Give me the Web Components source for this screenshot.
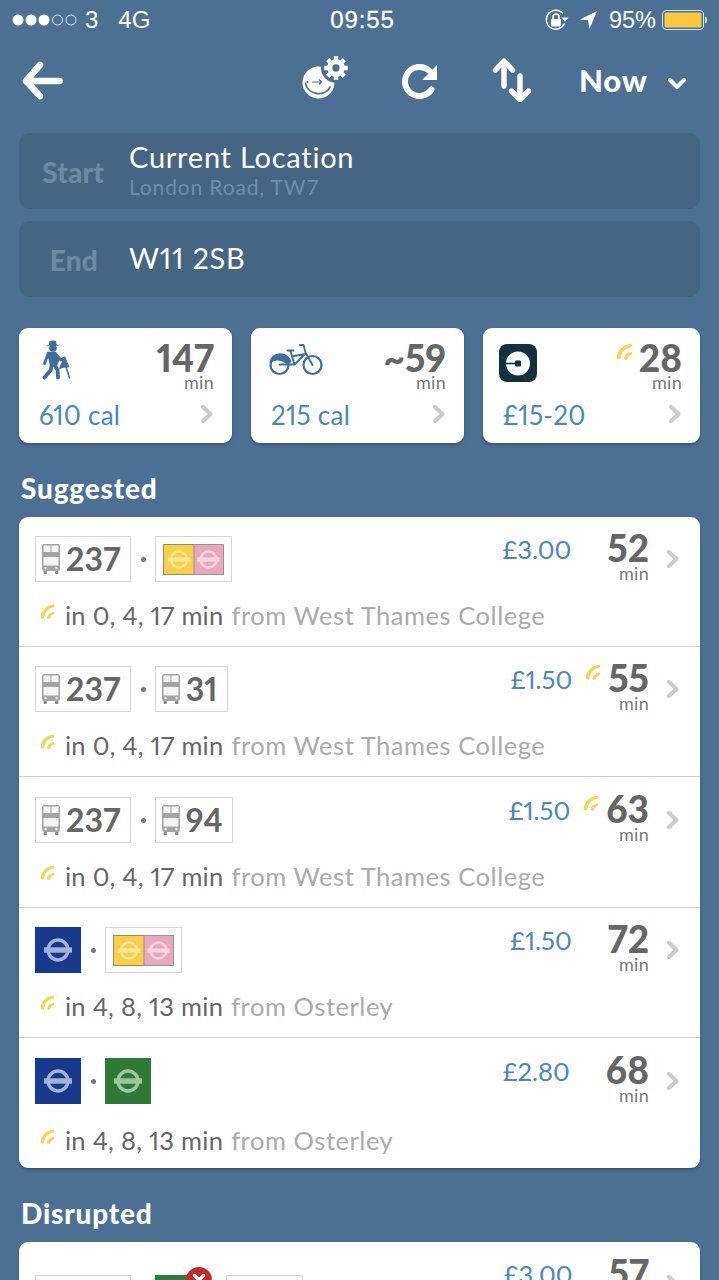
<!DOCTYPE html>
<html lang="en"><head><meta charset="utf-8"><title>Routes</title>
<style>
html,body{margin:0;padding:0;background:#4c7094;}
body{width:719px;height:1280px;overflow:hidden;font-family:Lato,"Open Sans",sans-serif;}
.cards{display:grid;grid-template-columns:213px 213px 217px;gap:19px;padding:31px 19px 0 19px;}
.fields{display:flex;flex-direction:column;gap:12px;padding:0 19px;}
</style></head><body>
<status-bar></status-bar>
<nav-bar></nav-bar>
<div class="fields">
<place-field label="Start" title-text="Current Location" sub="London Road, TW7"></place-field>
<place-field label="End" title-text="W11 2SB"></place-field>
</div>
<div class="cards">
<mode-card time="147" sub="610 cal" icon="walk"></mode-card>
<mode-card time="~59" sub="215 cal" icon="bike"></mode-card>
<mode-card time="28" sub="£15-20" icon="uber" live></mode-card>
</div>
<section-title style="--top:30px">Suggested</section-title>
<route-list style="margin-top:14px">
<route-row price="£3.00" time="52"><bus-badge slot="badges" num="237"></bus-badge><sep-dot slot="badges"></sep-dot><rail-badge slot="badges" pair></rail-badge>in 0, 4, 17 min<span slot="from">from West Thames College</span></route-row>
<route-row price="£1.50" time="55" live><bus-badge slot="badges" num="237"></bus-badge><sep-dot slot="badges"></sep-dot><bus-badge slot="badges" num="31"></bus-badge>in 0, 4, 17 min<span slot="from">from West Thames College</span></route-row>
<route-row price="£1.50" time="63" live tall><bus-badge slot="badges" num="237"></bus-badge><sep-dot slot="badges"></sep-dot><bus-badge slot="badges" num="94"></bus-badge>in 0, 4, 17 min<span slot="from">from West Thames College</span></route-row>
<route-row price="£1.50" time="72"><rail-badge slot="badges" color="#173a8e" ring="#a3b3d6"></rail-badge><sep-dot slot="badges"></sep-dot><rail-badge slot="badges" pair></rail-badge>in 4, 8, 13 min<span slot="from">from Osterley</span></route-row>
<route-row price="£2.80" time="68" last><rail-badge slot="badges" color="#173a8e" ring="#a3b3d6"></rail-badge><sep-dot slot="badges"></sep-dot><rail-badge slot="badges" color="#2f7a37" ring="#9ac8a0"></rail-badge>in 4, 8, 13 min<span slot="from">from Osterley</span></route-row>
</route-list>
<section-title style="--top:30px">Disrupted</section-title>
<route-list style="margin-top:14px">
<route-row price="£3.00" time="57" disrupted><bus-badge slot="badges" num="237"></bus-badge><sep-dot slot="badges"></sep-dot><rail-badge slot="badges" color="#2f7a37" ring="#9ac8a0" blocked></rail-badge><sep-dot slot="badges" style="--l:11px"></sep-dot><rail-badge slot="badges" pair></rail-badge></route-row>
</route-list>
<script>
const wifi=(w)=>`<svg width="${w}" height="${w}" viewBox="0 0 16 16" style="display:block"><path d="M.6 13.500C1 6.500 6.500 1 13.500.6c.7 0 1.200.7.9 1.400l-.6 1.500C8.500 4 4.800 8 4 13.800c-.2 1-3.400 1-3.400-.3z" fill="#efd654"/><path d="M7 14.300C7.200 11 9.800 8.300 13.500 8c.8 0 1 .6.7 1.300l-.5 1.300c-1.900.3-3 1.500-3.500 3.700-.2.800-2.800.9-2.700 0z" fill="#efd654"/></svg>`;
const chev=`<svg width="14" height="20" viewBox="0 0 14 20" style="display:block"><path d="M3 3l7.500 7L3 17" fill="none" stroke="#cbcbcb" stroke-width="4.200" stroke-linecap="round" stroke-linejoin="round"/></svg>`;
const ICONS={
walk:`<svg width="32" height="40" viewBox="0 0 32 40" style="display:block;margin:12px 0 0 21px"><g fill="#3f6e9b" stroke="#3f6e9b" stroke-linecap="round" stroke-linejoin="round"><path d="M9.500 1c2.500-.8 5-.6 6.500 0l.5 3.500 2.500 1.200-13 0L9 4.500z" stroke="none"/><circle cx="13" cy="8" r="3.800" stroke="none"/><path d="M7.500 12.500h8l3 8-2 5H10.500l-1-5z" stroke-width="1.400"/><path d="M15 13.500l6 6.500 2.500-1.500" fill="none" stroke-width="3"/><path d="M8 14L4.500 23.500" fill="none" stroke-width="3"/><path d="M12 24l-1.500 6.500L4.500 37.500" fill="none" stroke-width="3.800"/><path d="M14 24l3.500 6 .5 7.500" fill="none" stroke-width="3.800"/><path d="M24.500 17L19.500 28.500c2.500-1 5-1.700 9-1.500z" stroke-width="1"/><path d="M25.500 25l4 13" fill="none" stroke-width="1.500"/></g></svg>`,
bike:`<svg width="54" height="32" viewBox="0 0 54 32" style="display:block;margin:16px 0 0 18px"><g fill="none" stroke="#3f6e9b" stroke-linecap="round" stroke-linejoin="round"><circle cx="10.500" cy="21" r="9" stroke-width="2.200"/><circle cx="43.500" cy="21" r="9" stroke-width="2.200"/><path d="M.5 19C1 13 6.500 8.500 13 9.500c4.500.6 8 3.500 9.500 8-1.500 2.500-4 3-6 2C12 15.500 6 15.500.5 19z" fill="#3f6e9b" stroke="none"/><path d="M18.500 6.500h6M21.500 7l4 13.500h-15M31 1h3.500l2 7.500 7 12.500M36.500 9.500L25.500 20.500M23 12.500l13 -2.500" stroke-width="1.900"/></g></svg>`,
uber:`<svg width="38" height="38" viewBox="0 0 38 38" style="display:block;margin:16px 0 0 16px"><rect width="38" height="38" rx="8" fill="#12303f"/><path d="M0 12l19 8 19-10M8 0l11 20 9 18M0 28l19-8" stroke="#1d4050" stroke-width="1" fill="none"/><circle cx="19" cy="19.500" r="12" fill="#fff"/><path d="M7 19.500h12" stroke="#12303f" stroke-width="1.600"/><rect x="16" y="16.500" width="6" height="6" rx="1" fill="#12303f"/></svg>`};
function def(name,html){customElements.define(name,class extends HTMLElement{connectedCallback(){if(this.shadowRoot)return;const r=this.attachShadow({mode:'open'});r.innerHTML=typeof html==='function'?html(this):html;}});}

def('status-bar',`<style>:host{display:flex;align-items:center;height:40px;position:relative;color:#fff;font:400 24px "Liberation Sans",Arial,sans-serif;}
.sig{margin-left:12px;display:block}.l{margin-left:6px}.g{margin-left:20px}.c{text-align:center;padding-left:6px;letter-spacing:.9px;-webkit-text-stroke:.3px #fff}.r{display:flex;align-items:center;margin-right:12px}
.p{margin:0 6px 0 12px;font-size:23.500px}</style>
<svg class="sig" width="67" height="14" viewBox="0 0 67 14"><g fill="#fff"><circle cx="6" cy="7" r="5.500"/><circle cx="19" cy="7" r="5.500"/><circle cx="32" cy="7" r="5.500"/></g><g fill="none" stroke="#dfe6ee" stroke-width="1"><circle cx="45.500" cy="7" r="5"/><circle cx="59" cy="7" r="5"/></g></svg>
<span class="l">3</span><span class="g">4G</span><span class="c" style="position:absolute;left:0;right:0">09:55</span><span style="flex:1"></span>
<span class="r"><svg width="24" height="22" viewBox="0 0 24 22" style="margin-right:11px"><path d="M19.500 14.500A9.500 9.500 0 1 1 18 4.500" fill="none" stroke="#fff" stroke-width="1.400"/><path d="M16.500 7.500h7l-3.500 4z" fill="#fff" transform="translate(0 1)"/><rect x="6" y="10" width="10" height="7.500" rx="1" fill="#fff"/><path d="M8 10V8a3 3 0 0 1 6 0v2" fill="none" stroke="#fff" stroke-width="1.500"/></svg>
<svg width="17" height="18" viewBox="0 0 17 18"><path d="M17 0L0 8.500l8 .8L9.500 18z" fill="#fff"/></svg>
<span class="p">95%</span>
<svg width="45" height="20" viewBox="0 0 45 20"><rect x=".5" y=".5" width="41" height="19" rx="3.500" fill="none" stroke="#d7dfe7"/><rect x="2.500" y="2.500" width="37" height="15" rx="1.500" fill="#f9c83c"/><path d="M43 6.500c1.500.3 2 1.500 2 3.500s-.5 3.200-2 3.500z" fill="#d7dfe7"/></svg></span>`);

def('nav-bar',`<style>:host{display:flex;align-items:flex-start;height:93px;position:relative;color:#fff}
svg{display:block}.now{font:900 31px Lato,sans-serif;letter-spacing:.8px;line-height:36px;margin:22px 0 0 46px}</style>
<svg style="margin:21px 0 0 21px" width="42" height="40" viewBox="0 0 42 40"><path d="M38.500 20H6M19 4L5 20l14 15" fill="none" stroke="#fff" stroke-width="6.500" stroke-linecap="round" stroke-linejoin="round"/></svg>
<svg style="margin:16px 0 0 238px" width="48" height="44" viewBox="0 0 48 44"><circle cx="17.500" cy="26.500" r="16" fill="#fff"/><circle cx="35" cy="12" r="15" fill="#4c7094"/><path d="M4.500 27.500C7 39 24 41.500 29 31" fill="none" stroke="#4c7094" stroke-width="1.800" stroke-linecap="round"/><circle cx="6.500" cy="26" r="1.100" fill="#4c7094"/><path d="M11 26h9.500M18 23.500l2.500 2.500-2.500 2.500" fill="none" stroke="#4c7094" stroke-width="1.200"/><g transform="translate(35 12) scale(1.12)"><circle r="5.500" fill="none" stroke="#fff" stroke-width="4.500"/><g fill="#fff"><rect x="-2" y="-10.500" width="4" height="4"/><rect x="-2" y="-10.500" width="4" height="4" transform="rotate(45)"/><rect x="-2" y="-10.500" width="4" height="4" transform="rotate(90)"/><rect x="-2" y="-10.500" width="4" height="4" transform="rotate(135)"/><rect x="-2" y="-10.500" width="4" height="4" transform="rotate(180)"/><rect x="-2" y="-10.500" width="4" height="4" transform="rotate(225)"/><rect x="-2" y="-10.500" width="4" height="4" transform="rotate(270)"/><rect x="-2" y="-10.500" width="4" height="4" transform="rotate(315)"/></g></g></svg>
<svg style="margin:22px 0 0 53px" width="38" height="38" viewBox="0 0 38 38"><path d="M29.500 27.500A14.500 14.500 0 1 1 27 8.500" fill="none" stroke="#fff" stroke-width="6" stroke-linecap="round"/><path d="M35 3v15H20z" fill="#fff"/></svg>
<svg style="margin:18px 0 0 51px" width="42" height="44" viewBox="0 0 42 44"><path d="M13 28V4M4.500 12L13 3l8.500 9M29 18v23M20.500 33l8.500 8.500 8.500-8.500" fill="none" stroke="#fff" stroke-width="5.400" stroke-linecap="round" stroke-linejoin="round"/></svg>
<span class="now">Now</span>
<svg style="margin:36px 0 0 19px" width="20" height="16" viewBox="0 0 20 16"><path d="M3 4l7 7 7-7" fill="none" stroke="#fff" stroke-width="4" stroke-linecap="round" stroke-linejoin="round"/></svg>`);

def('place-field',h=>{const s=h.getAttribute('sub');const lab=h.getAttribute('label');return `<style>:host{display:flex;align-items:center;height:76px;background:#466583;border-radius:11px;font-variant-numeric:proportional-nums}
.l{width:85px;text-align:right;font:900 28px Lato,sans-serif;font-variant-numeric:proportional-nums;color:#6f899f;flex:none;letter-spacing:.2px}
.t{color:#fff;font:400 29px/32px Lato,sans-serif;font-variant-numeric:proportional-nums;letter-spacing:.75px}
.s{color:#6f8eaa;font:400 21px/26px Lato,sans-serif;letter-spacing:.85px;margin-top:1px}
.c{display:flex;flex-direction:column;margin-left:25px;margin-top:-2px}
</style><span class="l" style="${s?'margin-top:1px':'margin-top:1px;width:79px;margin-right:6px'}">${lab}</span><div class="c"><span class="t">${h.getAttribute('title-text')}</span>${s?`<span class="s">${s}</span>`:''}</div>`});

def('mode-card',h=>`<style>:host{display:flex;flex-direction:column;height:115px;background:#fff;border-radius:9px;box-shadow:0 2px 3px rgba(30,50,70,.45);position:relative;font-variant-numeric:proportional-nums}
.top{display:flex;justify-content:space-between;height:66px}
.tm{position:relative;text-align:right;padding:13px 18px 0 0;color:#666}
.n{font:900 37px/34px Lato,sans-serif;font-variant-numeric:proportional-nums;display:block}.m{font:400 18px/15px Lato,sans-serif;display:block;color:#777;letter-spacing:.3px}
.w{position:absolute;left:-23px;top:15px}
.b{display:flex;justify-content:space-between;align-items:center;padding:6px 18px 0 20px;color:#4a86c0;font:400 26px/30px Lato,sans-serif;font-variant-numeric:proportional-nums;letter-spacing:.25px}
.b svg{margin-top:-2px}</style>
<div class="top">${ICONS[h.getAttribute('icon')]}<div class="tm">${h.hasAttribute('live')?`<span class="w">${wifi(18)}</span>`:''}<span class="n">${h.getAttribute('time')}</span><span class="m">min</span></div></div>
<div class="b"><span>${h.getAttribute('sub')}</span>${chev}</div>`);

def('section-title',`<style>:host{display:block;padding:var(--top) 21px 0;color:#fff;font:900 28px/30px Lato,sans-serif;letter-spacing:.8px}</style><slot></slot>`);

def('route-list',`<style>:host{display:block;margin:13px 19px 0;background:#fff;border-radius:9px;box-shadow:0 2px 3px rgba(30,50,70,.45);}</style><slot></slot>`);

def('route-row',h=>{const live=h.hasAttribute('live'),dis=h.hasAttribute('disrupted'),last=h.hasAttribute('last'),tall=h.hasAttribute('tall');return `<style>:host{display:block;height:${tall||last?130:129}px;position:relative;${last||dis?'':'border-bottom:1px solid #c9ced3'};font-variant-numeric:proportional-nums}
.top{display:flex;height:52px;padding:${last||tall?15:14}px 20px 0 16px;align-items:flex-start}
.bd{display:flex;align-items:center;margin-top:${dis?19:5}px;flex:1}
.p{color:#4a86c0;font:400 25.500px/28px Lato,sans-serif;font-variant-numeric:proportional-nums;margin:4px 36px 0 0}
.tm{position:relative;text-align:right;color:#666;margin-right:17px}
.n{font:900 37px/34px Lato,sans-serif;font-variant-numeric:proportional-nums;display:block}.m{font:400 18px/16px Lato,sans-serif;display:block;color:#777;letter-spacing:.3px}
.w{position:absolute;left:-23px;top:3px}
.line{display:flex;align-items:center;margin:${last?20:17}px 0 0 21px;font:400 25.500px/30px Lato,sans-serif;font-variant-numeric:proportional-nums;color:#666;white-space:nowrap;letter-spacing:.25px}
.ic{margin-right:9px;margin-top:-6px}.f{color:#aaa;margin-left:8px;letter-spacing:.55px}
.chev{margin-top:18px}</style>
<div class="top"><div class="bd"><slot name="badges"></slot></div><span class="p">${h.getAttribute('price')}</span>
<div class="tm">${live?`<span class="w">${wifi(17)}</span>`:''}<span class="n">${h.getAttribute('time')}</span><span class="m">min</span></div><div class="chev">${chev}</div></div>
<div class="line"><span class="ic">${wifi(16)}</span><slot></slot><span class="f"><slot name="from"></slot></span></div>`});

def('bus-badge',h=>`<style>:host{display:flex;align-items:center;box-sizing:border-box;height:46px;border:1px solid #d6d6d6;padding:0 9px 0 6px;color:#666;font:700 32px/44px Lato,sans-serif;font-variant-numeric:proportional-nums;letter-spacing:.2px}
svg{display:block;margin-right:6px}</style><svg width="18" height="30" viewBox="0 0 18 30"><rect x="0" y="0" width="18" height="27" rx="2.500" fill="#a3a3a3"/><rect x="1.500" y="1.500" width="7" height="6.500" fill="#f4f4f4"/><rect x="9.500" y="1.500" width="7" height="6.500" fill="#f4f4f4"/><rect x="1.500" y="13" width="15" height="8.500" fill="#f4f4f4"/><rect x="1.500" y="27" width="3.500" height="3" rx="1" fill="#8a8a8a"/><rect x="13" y="27" width="3.500" height="3" rx="1" fill="#8a8a8a"/><circle cx="3.500" cy="24" r="1.200" fill="#eee"/><circle cx="14.500" cy="24" r="1.200" fill="#eee"/></svg>${h.getAttribute('num')}`);

const roundel=(r,x,y,rad,w)=>`<rect x="${x-rad*1.4}" y="${y-rad*.27}" width="${rad*2.8}" height="${rad*.54}" fill="${r}"/><circle cx="${x}" cy="${y}" r="${rad}" fill="none" stroke="${r}" stroke-width="${w}"/>`;
def('rail-badge',h=>{if(h.hasAttribute('pair'))return `<style>:host{display:block;box-sizing:border-box;width:77px;height:46px;border:1px solid #d6d6d6;padding:7px 7px}svg{display:block}</style><svg width="61" height="31" viewBox="0 0 61 31"><rect x=".5" y=".5" width="31" height="30" fill="#f8cf46" stroke="#8e8a6a"/><rect x="31" y=".5" width="29.500" height="30" fill="#e9a7be" stroke="#9c8e94"/>${roundel("#fbe799",16,15.500,8,2.600)}${roundel("#f7d6e1",45.500,15.500,8,2.600)}</svg>`;
const c=h.getAttribute('color'),r=h.getAttribute('ring'),b=h.hasAttribute('blocked');return `<style>:host{display:block;width:46px;height:46px;position:relative}svg{display:block}.x{position:absolute;left:31px;top:-8px}</style><svg width="46" height="46" viewBox="0 0 46 46"><rect width="46" height="46" fill="${c}"/>${roundel(r,23,23,10,3.400)}</svg>${b?`<svg class="x" width="26" height="26" viewBox="0 0 26 26"><circle cx="13" cy="13" r="13" fill="#c42b27"/><path d="M8.500 8.500l9 9M17.500 8.500l-9 9" stroke="#fff" stroke-width="3.400" stroke-linecap="round"/></svg>`:''}`});

def('sep-dot',`<style>:host{display:block;width:5px;height:5px;border-radius:50%;background:#777;margin:0 9px 0 var(--l,10px)}</style>`);
</script>
</body></html>
